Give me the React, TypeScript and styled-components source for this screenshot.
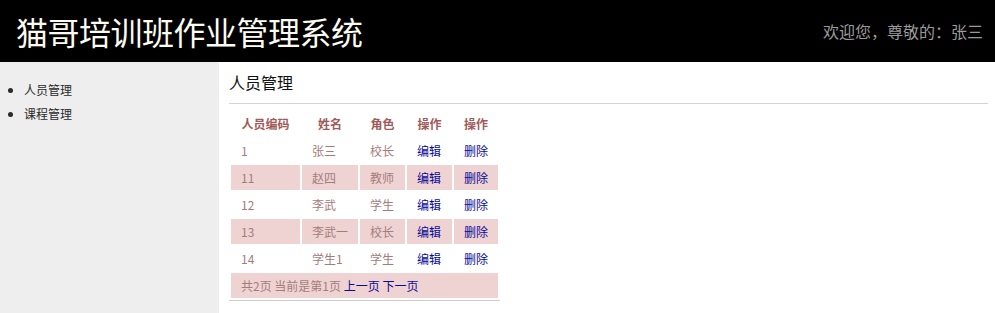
import React from 'react'
import styled, {createGlobalStyle} from 'styled-components'

const GlobalStyle = createGlobalStyle`
  html, body {
    margin: 0;
    padding: 0;
    height: 100%;
  }
  body {
    font-family: "Noto Sans CJK SC", "Noto Sans", sans-serif;
    font-size: 12px;
    color: #333;
    background: #fff;
  }
  #root {
    height: 100%;
  }
`

interface Person {
  id: number
  name: string
  role: string
}

const people: Person[] = [
  {id: 1, name: '张三', role: '校长'},
  {id: 11, name: '赵四', role: '教师'},
  {id: 12, name: '李武', role: '学生'},
  {id: 13, name: '李武一', role: '校长'},
  {id: 14, name: '学生1', role: '学生'},
]

// content widths of the five columns (padding comes on top)
const columns = [
  {label: '人员编码', width: 49},
  {label: '姓名', width: 36},
  {label: '角色', width: 25},
  {label: '操作', width: 25},
  {label: '操作', width: 24},
]

const App: React.FC = () => {
  return (
    <Page>
      <GlobalStyle />
      <TopBar>
        <SiteTitle>猫哥培训班作业管理系统</SiteTitle>
        <Welcome>欢迎您，尊敬的：张三</Welcome>
      </TopBar>
      <Body>
        <Sidebar>
          <NavList>
            <li>人员管理</li>
            <li>课程管理</li>
          </NavList>
        </Sidebar>
        <Main>
          <PageTitle>人员管理</PageTitle>
          <Table>
            <thead>
              <tr>
                {columns.map((c, i) => (
                  <Th key={i} $w={c.width}>
                    {c.label}
                  </Th>
                ))}
              </tr>
            </thead>
            <tbody>
              {people.map((p, i) => (
                <Row key={p.id} $alt={i % 2 === 1}>
                  <Td>{p.id}</Td>
                  <Td>{p.name}</Td>
                  <Td>{p.role}</Td>
                  <Td>
                    <Link>编辑</Link>
                  </Td>
                  <Td>
                    <Link>删除</Link>
                  </Td>
                </Row>
              ))}
              <Row $alt>
                <Td colSpan={5}>
                  共2页 当前是第1页 <Link>上一页</Link> <Link>下一页</Link>
                </Td>
              </Row>
            </tbody>
          </Table>
        </Main>
      </Body>
    </Page>
  )
}

export default App

const Page = styled.div`
  display: flex;
  flex-direction: column;
  height: 100%;
`

const TopBar = styled.header`
  display: flex;
  justify-content: space-between;
  align-items: center;
  height: 62px;
  padding: 0 12px 0 16px;
  background-color: #000;
  flex-shrink: 0;
`

const SiteTitle = styled.h1`
  margin: 0;
  font-size: 32px;
  font-weight: normal;
  color: #fbfbf0;
  letter-spacing: -0.5px;
`

const Welcome = styled.div`
  font-size: 16px;
  color: #9a9a9a;
`

const Body = styled.div`
  display: flex;
  flex: 1;
`

const Sidebar = styled.nav`
  width: 219px;
  flex-shrink: 0;
  background-color: #eee;
`

const NavList = styled.ul`
  margin: 16px 0 0;
  padding-left: 24px;
  line-height: 24px;
  color: #2a2a2a;
`

const Main = styled.main`
  flex: 1;
  padding: 0 7px 0 10px;
`

const PageTitle = styled.div`
  margin-top: 8px;
  padding-bottom: 9px;
  font-size: 16px;
  line-height: 24px;
  color: #111;
  border-bottom: 1px solid #d4d4d4;
`

const Table = styled.table`
  margin-top: 5px;
  border-spacing: 2px;
  border-bottom: 1px solid #d8c8c8;
`

const Th = styled.th<{$w: number}>`
  width: ${props => props.$w}px;
  height: 25px;
  padding: 0 10px;
  font-weight: bold;
  color: #a05a5a;
  text-align: center;
  white-space: nowrap;
`

const Row = styled.tr<{$alt?: boolean}>`
  background-color: ${props => (props.$alt ? '#efd3d3' : 'transparent')};
`

const Td = styled.td`
  height: 25px;
  padding: 0 10px;
  color: #a47c7c;
  white-space: nowrap;
`

const Link = styled.a`
  color: #0a0a9a;
  cursor: pointer;
`
